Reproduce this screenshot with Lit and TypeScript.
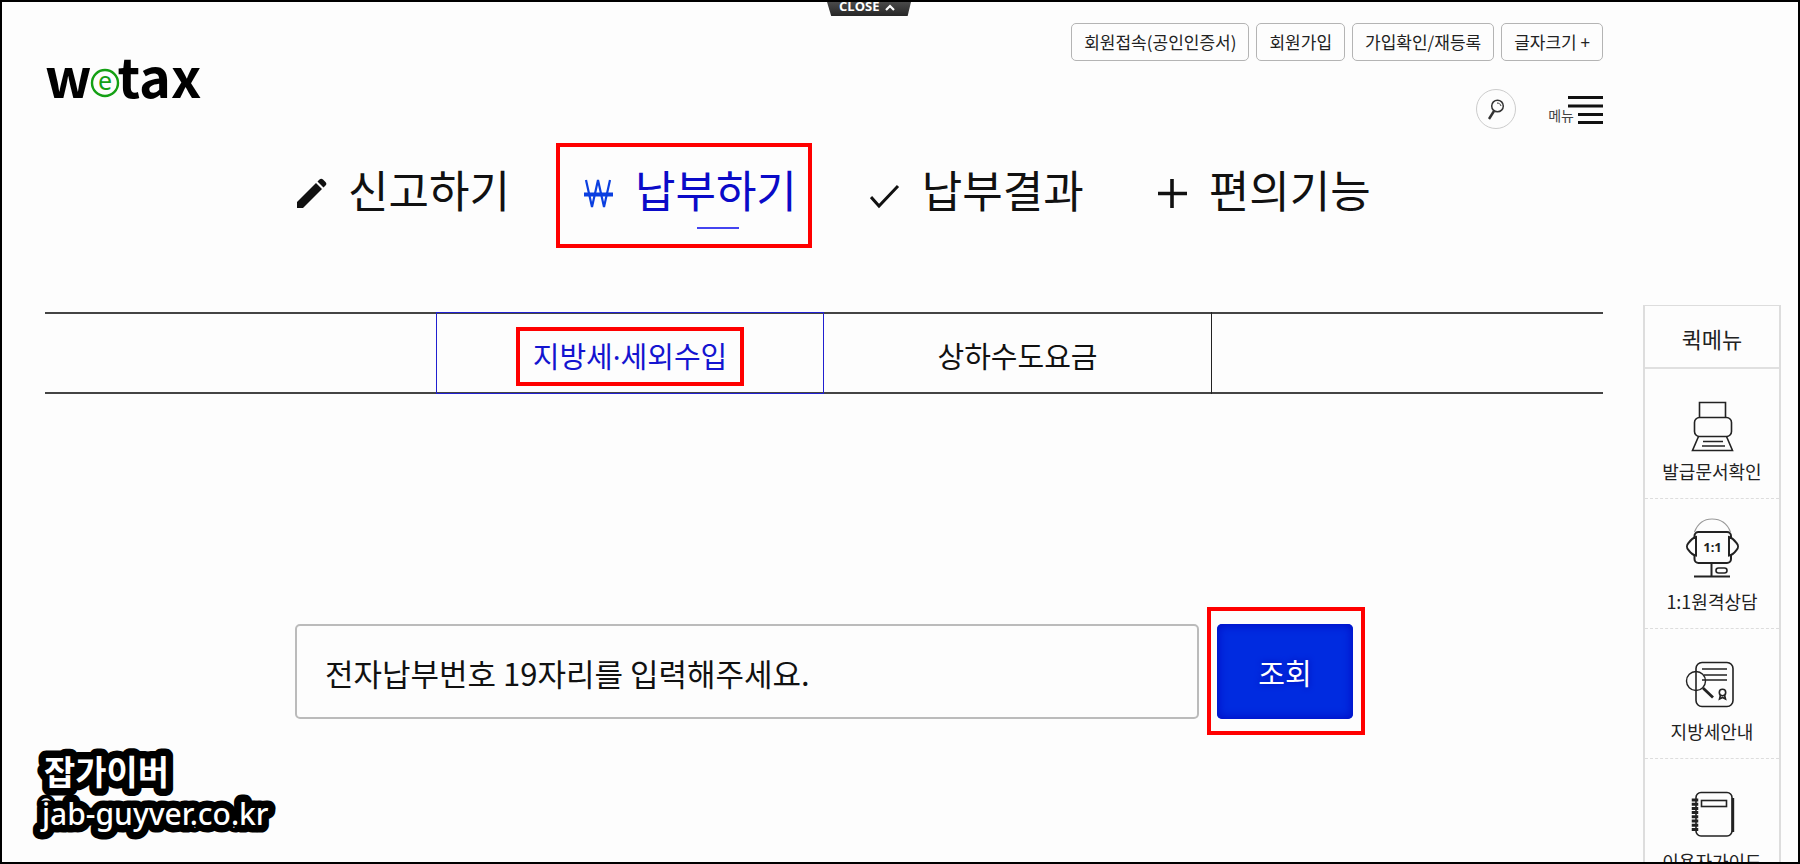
import { LitElement, html, svg, css } from "lit";
import { customElement, state } from "lit/decorators.js";

const pencil = svg`<path d="M1 30v-6L20 5l6 6L7 30zM21.500 3.500l2-2a2.500 2.500 0 0 1 3.500 0l2.500 2.500a2.500 2.500 0 0 1 0 3.500l-2 2z" fill="currentColor"/>`;
const won = svg`<path d="M3 2l6 27L15 2l6 27L27 2" fill="none" stroke="#0b3fe0" stroke-width="2.200"/><path d="M1 16.500h29" fill="none" stroke="#0b3fe0" stroke-width="4"/>`;
const check = svg`<path d="M1 19l8 9L28 8" fill="none" stroke="currentColor" stroke-width="3"/>`;
const plus = svg`<path d="M15 1v29M1 15.500h29" fill="none" stroke="currentColor" stroke-width="3.600"/>`;

const printer = svg`
  <path d="M15.500 29V14.500h26V29M14.500 48.500L8.500 62.500h40l-6-14"/>
  <rect x="10.500" y="29.500" width="37" height="19" rx="5"/>
  <path d="M19 53.500h20M18 58h23"/>`;
const remote = svg`
  <path d="M10.500 14C14 5 20 1 28 1s15 4 18.500 13" stroke="#999" stroke-width="1.200"/>
  <rect x="10.500" y="14" width="36.500" height="31" rx="4" stroke-width="2"/>
  <path d="M12 19c-4 1-6 4-7.500 6-2 2-2 5 0 7C6 34 8 37 12 37.500zM45 19c4 1 6 4 7.500 6 2 2 2 5 0 7C51 34 49 37 45 37.500z" fill="#fdfdfd" stroke-width="2"/>
  <path d="M27.500 45v13M10 58.500h36" stroke-width="2"/>
  <rect x="32" y="50" width="11" height="5" rx="2.500"/>
  <text x="28.500" y="34" class="glyph-text">1:1</text>`;
const guide = svg`
  <rect x="12" y="14.500" width="37" height="44" rx="6"/>
  <circle cx="12" cy="33" r="9.500" stroke-width="1.400"/>
  <path d="M18 21h25M20 27h23M18 32h25"/>
  <path d="M19 40l10 9.500" stroke-width="2.800"/>
  <circle cx="38.500" cy="44.500" r="3.200"/>
  <path d="M36.500 47l-1 4 3-1.500 3 1.500-1-4"/>`;
const notebook = svg`
  <rect x="12" y="14.500" width="36" height="43.500" rx="5"/>
  <path d="M49 20v34" stroke-width="2.400"/>
  <rect x="17.500" y="22.500" width="25" height="6"/>
  <path d="M11 20.500v33" stroke-width="6.500" stroke-dasharray="3 1.200"/>`;

@customElement("app-root")
export class AppRoot extends LitElement {
  @state() private nav = 1;
  @state() private tab = 0;

  private navItems = [
    { label: "신고하기", icon: pencil },
    { label: "납부하기", icon: won },
    { label: "납부결과", icon: check },
    { label: "편의기능", icon: plus },
  ];
  private quickItems = [
    { label: "발급문서확인", icon: printer },
    { label: "1:1원격상담", icon: remote },
    { label: "지방세안내", icon: guide },
    { label: "이용자가이드", icon: notebook },
  ];

  static styles = css`
    :host {
      display: block;
      position: relative;
      box-sizing: border-box;
      height: 100vh;
      overflow: hidden;
      border: 2px solid #000;
      background: #fdfdfd;
      color: #111;
      font-family: "Noto Sans CJK KR", "Noto Sans", sans-serif;
    }
    * { box-sizing: border-box; }
    a { color: inherit; text-decoration: none; }
    button, input { font-family: inherit; color: inherit; margin: 0; }
    svg { display: block; }

    .page {
      display: grid;
      grid-template-columns: minmax(0, 1fr) 138px;
      column-gap: 40px;
      padding: 0 17px 0 43px;
    }
    .close {
      position: absolute;
      top: 0;
      left: 50%;
      width: 84px;
      height: 14px;
      margin-left: -73px;
      padding: 0 0 0 12px;
      border: 0;
      overflow: hidden;
      display: flex;
      align-items: center;
      gap: 6px;
      background: linear-gradient(#4a4a4a, #262626);
      clip-path: polygon(0 0, 100% 0, 96% 100%, 5% 100%);
      color: #fff;
      font: 700 13px/14px "Open Sans", sans-serif;
    }
    .close span { margin-top: -6px; }
    .close svg { margin-top: -4px; }

    .header {
      display: flex;
      justify-content: space-between;
      height: 159px;
    }
    .logo {
      display: flex;
      height: 58px;
      margin-top: 44px;
      color: #000;
      font: 700 54px/58px "Noto Sans CJK KR", sans-serif;
    }
    .logo svg { margin: 22px -2px 0; }
    .logo-e { font: 400 25px "Noto Sans", sans-serif; fill: #14a014; text-anchor: middle; }
    .tools {
      display: flex;
      flex-direction: column;
      align-items: flex-end;
      padding-top: 21px;
    }
    .utilities { display: flex; gap: 7px; }
    .utility {
      height: 38px;
      padding: 0 12px;
      border: 1px solid #b4b4b4;
      border-radius: 5px;
      background: #fdfdfd;
      color: #222;
      font-size: 17px;
      line-height: 32px;
      white-space: nowrap;
    }
    .shortcuts { display: flex; gap: 32px; margin-top: 28px; }
    .round {
      width: 40px;
      height: 40px;
      padding: 0;
      border: 1px solid #ccc;
      border-radius: 50%;
      background: none;
    }
    .menu {
      display: flex;
      align-items: flex-end;
      height: 36px;
      padding: 0;
      border: 0;
      background: none;
      color: #444;
      font-size: 14px;
      line-height: 20px;
    }
    .menu svg { margin-left: -6px; }

    .nav {
      display: flex;
      gap: 73px;
      padding-left: 251px;
    }
    .nav-item {
      position: relative;
      display: flex;
      align-items: center;
      gap: 21px;
      font-size: 44px;
      line-height: 56px;
      white-space: nowrap;
    }
    .nav-icon { margin-top: 8px; }
    .nav-item.active { color: #0a0ac8; }
    .nav-item.active span::after {
      content: "";
      position: absolute;
      right: 58px;
      bottom: -12px;
      width: 42px;
      height: 2px;
      background: #4444f0;
    }
    .marked { position: relative; }
    .marked::before {
      content: "";
      position: absolute;
      border: 4px solid #f00;
      pointer-events: none;
    }
    .nav-item.marked::before { inset: -18px -15px -31px -27px; }

    .tabs {
      display: grid;
      grid-template-columns: 391fr 388fr 388fr 391fr;
      height: 82px;
      margin-top: 95px;
      border: solid #444;
      border-width: 2px 0;
    }
    .tab {
      display: flex;
      align-items: center;
      justify-content: center;
      margin: -2px 0;
      padding: 8px 0 0;
      border: 0;
      border-right: 1px solid #222;
      background: none;
      font-family: "Noto Sans", "Noto Sans CJK KR", sans-serif;
      font-size: 29px;
      line-height: 42px;
      white-space: nowrap;
    }
    .tab:first-of-type { grid-column: 2; }
    .tab.active { border: 1px solid #2020d0; color: #1414d0; }
    .tab .marked::before { inset: -9px -17px -8px -17px; }

    .search {
      display: flex;
      gap: 18px;
      margin-top: 230px;
      padding: 0 250px;
    }
    .number {
      flex: 1;
      min-width: 0;
      height: 95px;
      padding: 1px 28px 0;
      border: 2px solid #bbb;
      border-radius: 5px;
      background: #fdfdfd;
      font-size: 31px;
    }
    .number::placeholder { color: #111; opacity: 1; }
    .submit {
      width: 136px;
      height: 95px;
      padding: 1px 0 0;
      border: 0;
      border-radius: 5px;
      background: #002be0;
      box-shadow: inset 0 0 8px 2px #0010c8;
      color: #fff;
      font-size: 29px;
      text-shadow: 0 0 6px #0008b0;
    }
    .submit.marked::before { inset: -17px -12px -16px -10px; }

    .quick {
      margin-top: 303px;
      border: 1px solid #ddd;
      border-width: 1px 2px;
      color: #222;
      text-align: center;
    }
    .quick-title {
      height: 63px;
      margin: 0;
      border-bottom: 2px solid #e0e0e0;
      font-size: 22px;
      font-weight: 400;
      line-height: 64px;
    }
    .quick-item {
      display: flex;
      flex-direction: column;
      align-items: center;
      height: 130px;
      padding-top: 19px;
      border-bottom: 1px dashed #ddd;
      font-size: 18px;
      line-height: 38px;
      white-space: nowrap;
    }
    .quick-icon { fill: none; stroke: #222; stroke-width: 1.600; }
    .glyph-text {
      font: 700 13px "Noto Sans", sans-serif;
      fill: #222;
      stroke: none;
      text-anchor: middle;
    }

    .credit {
      position: absolute;
      left: 28px;
      bottom: 16px;
      fill: #fff;
      stroke: #000;
      stroke-width: 15px;
      stroke-linejoin: round;
      paint-order: stroke fill;
      font-family: "Noto Sans", "Noto Sans CJK KR", sans-serif;
    }
    .credit-name { font-size: 34px; font-weight: 700; }
    .credit-site { font-size: 30px; font-weight: 500; }
  `;

  render() {
    return html`
      <div class="page">
        <main>
          <header class="header">
            <a class="logo" href="#" aria-label="wetax">
              <span>w</span>
              <svg width="30" height="30" viewBox="0 0 30 30">
                <circle cx="15" cy="15" r="13" fill="none" stroke="#14a014" stroke-width="2.400" />
                <text class="logo-e" x="15" y="22">e</text>
              </svg>
              <span>tax</span>
            </a>
            <div class="tools">
              <div class="utilities">
                <button class="utility">회원접속(공인인증서)</button>
                <button class="utility">회원가입</button>
                <button class="utility">가입확인/재등록</button>
                <button class="utility">글자크기 +</button>
              </div>
              <div class="shortcuts">
                <button class="round" aria-label="검색">
                  <svg width="38" height="38" viewBox="0 0 38 38" fill="none" stroke="#333">
                    <circle cx="20.500" cy="16" r="5.800" stroke-width="1.500" />
                    <path d="M17 21l-5 8" stroke-width="2.400" />
                    <path d="M20 13c2 0 3.500 1 4 3" />
                  </svg>
                </button>
                <button class="menu">
                  <span>메뉴</span>
                  <svg width="35" height="30" viewBox="0 0 35 30" fill="none" stroke="#111" stroke-width="3">
                    <path d="M0 2.500h35M0 11h35M10 19.500h25M10 27.500h25" />
                  </svg>
                </button>
              </div>
            </div>
          </header>

          <nav class="nav">
            ${this.navItems.map(
              (item, i) => html`
                <a
                  class="nav-item ${i === this.nav ? "active marked" : ""}"
                  href="#"
                  @click=${() => (this.nav = i)}
                >
                  <svg class="nav-icon" width="31" height="31" viewBox="0 0 31 31">${item.icon}</svg>
                  <span>${item.label}</span>
                </a>
              `
            )}
          </nav>

          <div class="tabs">
            ${["지방세·세외수입", "상하수도요금"].map(
              (label, i) => html`
                <button class="tab ${i === this.tab ? "active" : ""}" @click=${() => (this.tab = i)}>
                  <span class=${i === this.tab ? "marked" : ""}>${label}</span>
                </button>
              `
            )}
          </div>

          <form class="search" @submit=${(e: Event) => e.preventDefault()}>
            <input
              class="number"
              type="text"
              maxlength="19"
              aria-label="전자납부번호"
              placeholder="전자납부번호 19자리를 입력해주세요."
            />
            <button class="submit marked">조회</button>
          </form>
        </main>

        <aside class="quick">
          <h2 class="quick-title">퀵메뉴</h2>
          ${this.quickItems.map(
            (item) => html`
              <a class="quick-item" href="#">
                <svg class="quick-icon" width="56" height="64" viewBox="0 0 56 64">${item.icon}</svg>
                <span>${item.label}</span>
              </a>
            `
          )}
        </aside>
      </div>

      <button class="close">
        <span>CLOSE</span>
        <svg width="10" height="7" viewBox="0 0 10 7">
          <path d="M1 6l4-4 4 4" fill="none" stroke="#fff" stroke-width="2.200" />
        </svg>
      </button>
      <svg class="credit" width="260" height="100" viewBox="0 0 260 100">
        <text class="credit-name" x="14" y="39">잡가이버</text>
        <text class="credit-site" x="12" y="79">jab-guyver.co.kr</text>
      </svg>
    `;
  }
}
